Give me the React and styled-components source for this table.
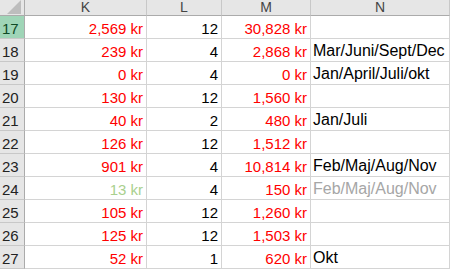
import React from 'react'
import styled, { createGlobalStyle } from 'styled-components'

const GlobalStyle = createGlobalStyle`
  html, body {
    margin: 0;
    padding: 0;
    background: #ffffff;
    overflow: hidden;
  }
  body {
    font-family: 'Liberation Sans', Arial, sans-serif;
  }
`

const rows = [
  { n: 17, k: '2,569 kr', l: '12', m: '30,828 kr', note: '' },
  { n: 18, k: '239 kr', l: '4', m: '2,868 kr', note: 'Mar/Juni/Sept/Dec' },
  { n: 19, k: '0 kr', l: '4', m: '0 kr', note: 'Jan/April/Juli/okt' },
  { n: 20, k: '130 kr', l: '12', m: '1,560 kr', note: '' },
  { n: 21, k: '40 kr', l: '2', m: '480 kr', note: 'Jan/Juli' },
  { n: 22, k: '126 kr', l: '12', m: '1,512 kr', note: '' },
  { n: 23, k: '901 kr', l: '4', m: '10,814 kr', note: 'Feb/Maj/Aug/Nov' },
  { n: 24, k: '13 kr', l: '4', m: '150 kr', note: 'Feb/Maj/Aug/Nov', muted: true },
  { n: 25, k: '105 kr', l: '12', m: '1,260 kr', note: '' },
  { n: 26, k: '125 kr', l: '12', m: '1,503 kr', note: '' },
  { n: 27, k: '52 kr', l: '1', m: '620 kr', note: 'Okt' },
]

const Sheet = styled.div`
  display: grid;
  grid-template-columns: 25px 122px 75px 89px 1fr;
  grid-auto-rows: 23px;
  grid-template-rows: 16px;
  width: 450px;
  font-size: 15px;
  color: #000;
`

const Corner = styled.div`
  position: relative;
  background: #e6e6e6;
  border-right: 1px solid #ababab;
  border-bottom: 1px solid #ababab;
  box-sizing: border-box;
  overflow: hidden;

  &::after {
    content: '';
    position: absolute;
    right: 3px;
    bottom: 1px;
    width: 0;
    height: 0;
    border-left: 14px solid transparent;
    border-bottom: 14px solid #bdbdbd;
  }
`

const ColHead = styled.div`
  display: flex;
  align-items: center;
  justify-content: center;
  background: #e6e6e6;
  border-right: 1px solid #c8c8c8;
  border-bottom: 1px solid #ababab;
  box-sizing: border-box;
  color: #444;
  font-size: 14px;
  line-height: 15px;
`

const RowHead = styled.div`
  display: flex;
  align-items: center;
  padding: 2px 0 0 2px;
  background: ${p => (p.$active ? '#9fd5b7' : '#e6e6e6')};
  color: ${p => (p.$active ? '#0f4a26' : '#222')};
  border-right: 1px solid #ababab;
  border-bottom: 1px solid #c8c8c8;
  box-sizing: border-box;
`

const Cell = styled.div`
  display: flex;
  align-items: center;
  justify-content: ${p => (p.$align === 'left' ? 'flex-start' : 'flex-end')};
  padding: 2px 3px 0 3px;
  border-right: 1px solid #d4d4d4;
  border-bottom: 1px solid #d4d4d4;
  box-sizing: border-box;
  color: ${p => p.$color || '#000'};
  white-space: nowrap;
  overflow: hidden;
`

const NoteCell = styled(Cell)`
  padding-left: 2px;
  font-size: 16px;
`

export default function App() {
  return (
    <>
      <GlobalStyle />
      <Sheet>
        <Corner />
        <ColHead>K</ColHead>
        <ColHead>L</ColHead>
        <ColHead>M</ColHead>
        <ColHead>N</ColHead>
        {rows.map(r => (
          <React.Fragment key={r.n}>
            <RowHead $active={r.n === 17}>{r.n}</RowHead>
            <Cell $color={r.muted ? '#a9d08e' : '#ff0000'}>{r.k}</Cell>
            <Cell>{r.l}</Cell>
            <Cell $color="#ff0000">{r.m}</Cell>
            <NoteCell $align="left" $color={r.muted ? '#a6a6a6' : '#000'}>{r.note}</NoteCell>
          </React.Fragment>
        ))}
      </Sheet>
    </>
  )
}
